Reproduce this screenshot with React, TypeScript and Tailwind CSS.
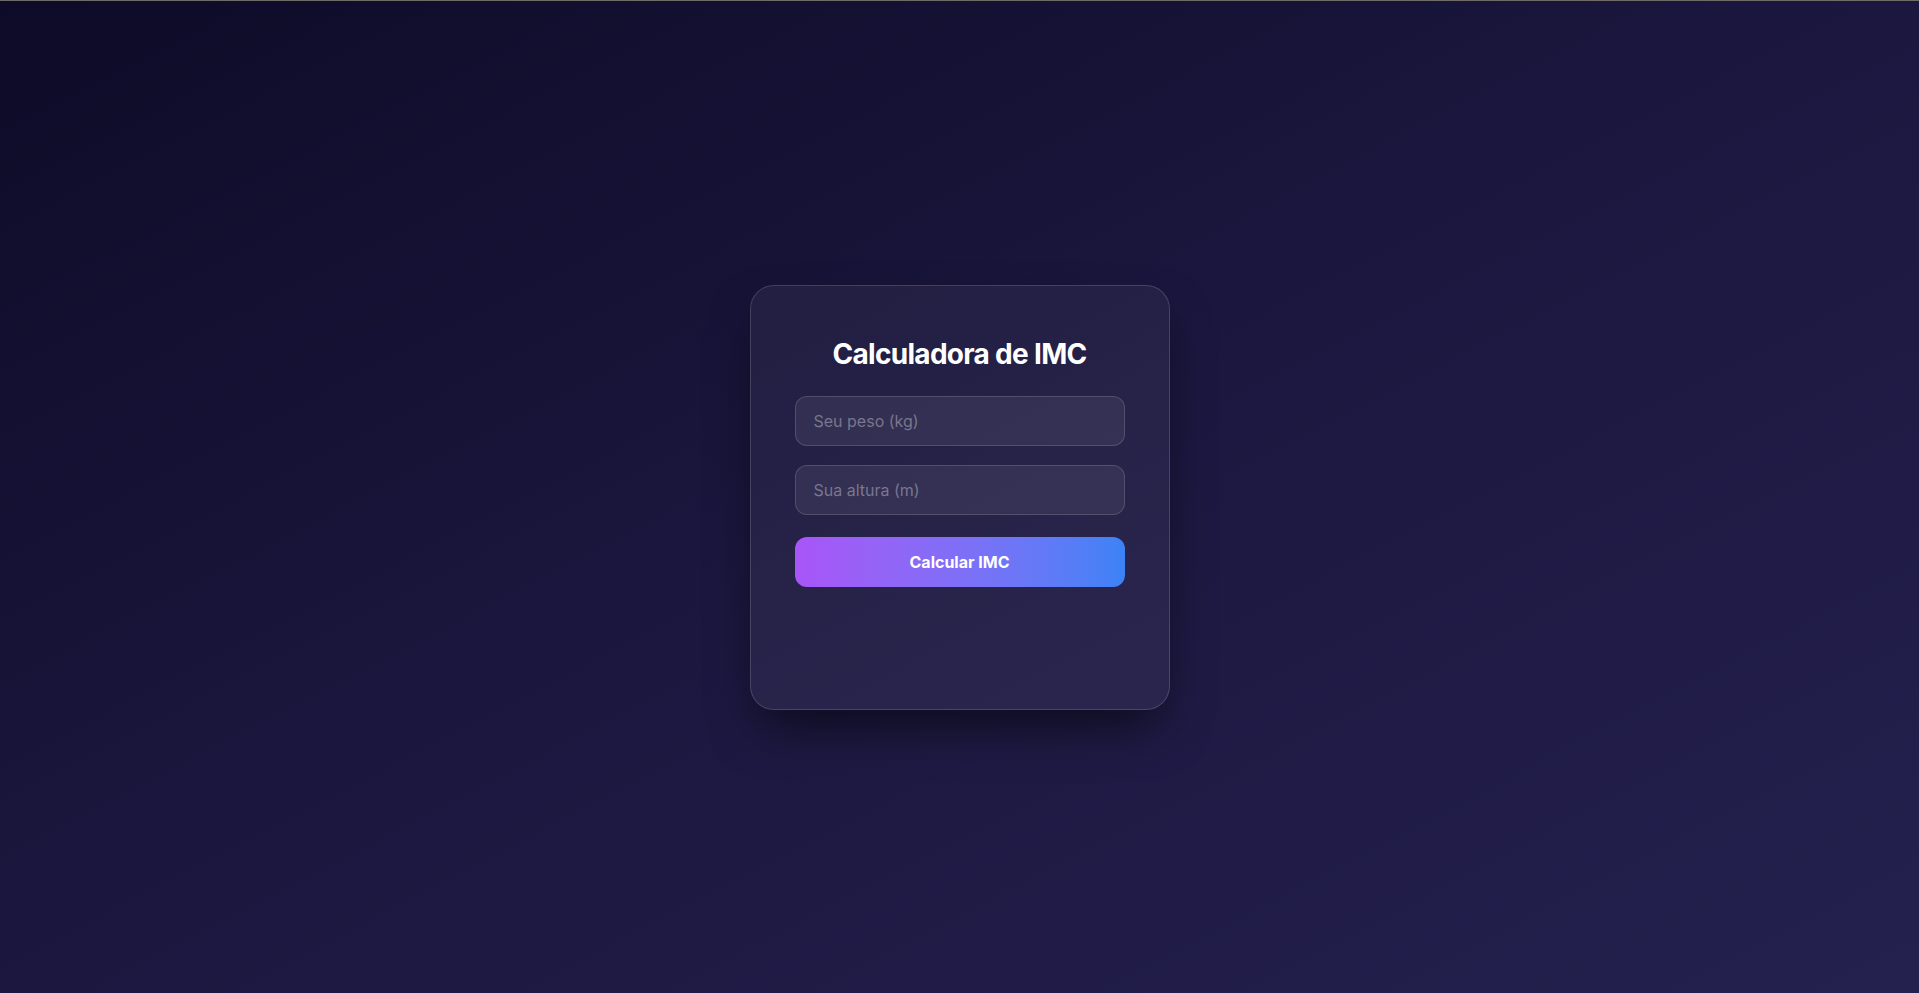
import React from "react";

export default function App() {
  return (
    <div
      className="min-h-screen w-full flex items-center justify-center bg-gradient-to-br from-[#0e0b28] via-[#1b173f] to-[#25214f] border-t border-[#6f6b67]"
      style={{ fontFamily: "Inter, 'Noto Sans', sans-serif" }}
    >
      <div className="w-[420px] h-[425px] rounded-3xl border border-white/15 bg-white/[0.05] shadow-[0_25px_50px_-12px_rgba(0,0,0,0.6)] px-[44px] pt-[50px] flex flex-col">
        <h1 className="text-[28px] leading-[36px] font-bold text-white text-center tracking-[-0.025em] mb-6">
          Calculadora de IMC
        </h1>
        <input
          type="number"
          placeholder="Seu peso (kg)"
          className="h-[50px] w-full rounded-xl border border-white/15 bg-white/[0.07] px-[18px] text-base text-white placeholder:text-white/35 outline-none"
        />
        <input
          type="number"
          placeholder="Sua altura (m)"
          className="mt-[19px] h-[50px] w-full rounded-xl border border-white/15 bg-white/[0.07] px-[18px] text-base text-white placeholder:text-white/35 outline-none"
        />
        <button className="mt-[22px] h-[50px] w-full rounded-xl bg-gradient-to-r from-[#a855f7] to-[#3b82f6] text-white font-bold text-base">
          Calcular IMC
        </button>
      </div>
    </div>
  );
}
